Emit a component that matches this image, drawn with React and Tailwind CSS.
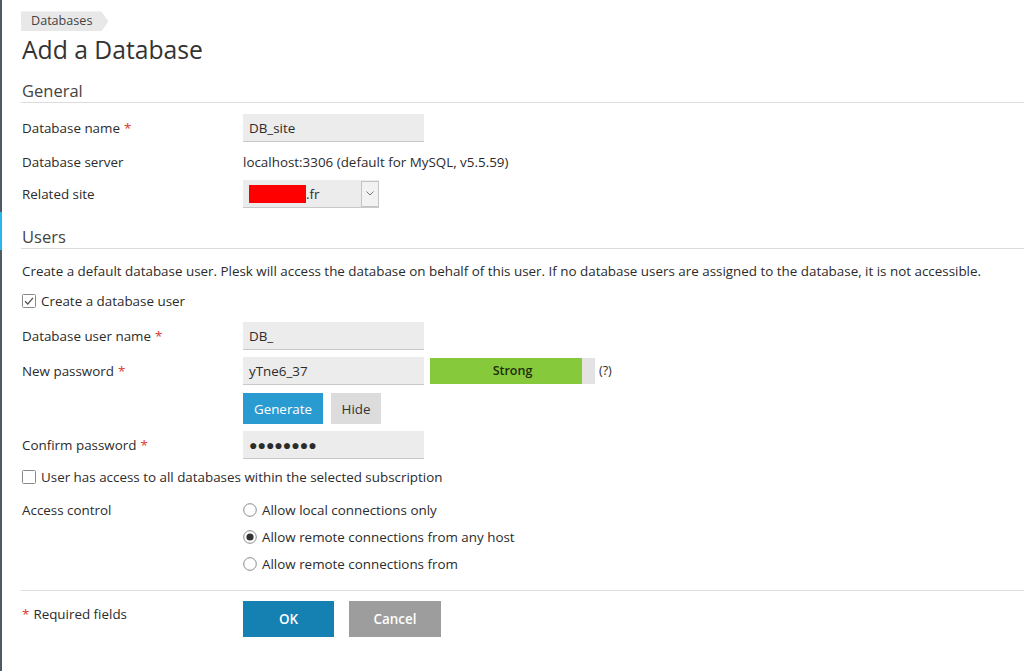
import React from 'react';

const Req = () => <span className="text-[#d9372c] ml-1">*</span>;

const Row = ({ label, required, className = '', children }) => (
  <div className={`flex items-center ${className}`}>
    <div className="w-[221px] shrink-0">
      {label}
      {required && <Req />}
    </div>
    <div className="flex items-center">{children}</div>
  </div>
);

const Input = ({ value, className = '' }) => (
  <div className={`w-[181px] h-[28px] bg-[#ececec] border-b border-[#c9c9c9] px-[6px] flex items-center ${className}`}>
    {value}
  </div>
);

const Checkbox = ({ checked }) => (
  <svg width="14" height="14" viewBox="0 0 14 14" className="shrink-0">
    <rect x="0.5" y="0.5" width="13" height="13" rx="1" fill="#fff" stroke="#8a8a8a" />
    {checked && <path d="M3 7.2 L5.8 10 L11 3.8" fill="none" stroke="#555" strokeWidth="1.3" />}
  </svg>
);

const Radio = ({ checked }) => (
  <svg width="14" height="14" viewBox="0 0 14 14" className="shrink-0">
    <circle cx="7" cy="7" r="6.3" fill="#fff" stroke="#8a8a8a" />
    {checked && <circle cx="7" cy="7" r="3.6" fill="#333" />}
  </svg>
);

const SectionHeader = ({ title, className = '' }) => (
  <div className={`h-[24px] leading-[24px] text-[16.5px] text-[#444] border-b border-[#dcdcdc] ${className}`}>
    {title}
  </div>
);

export default function App() {
  return (
    <div className="flex w-[1024px] h-[671px] bg-white text-[13.4px] text-[#2b2b2b] font-['Open_Sans',sans-serif] overflow-hidden">
      <div className="w-[2px] shrink-0 flex flex-col">
        <div className="h-[212px] bg-[#4e5b63]" />
        <div className="h-[38px] bg-[#29b6e8]" />
        <div className="flex-1 bg-[#4e5b63]" />
      </div>
      <div className="flex-1 pl-[19px]">
        <div className="pt-[10px]">
          <div className="inline-flex items-center h-[20px] pl-[10px] pr-[16px] bg-[#e8e8e8] text-[12.6px] text-[#444] [clip-path:polygon(0_0,calc(100%-7px)_0,100%_50%,calc(100%-7px)_100%,0_100%)]">
            Databases
          </div>
        </div>
        <div className="h-[36px] leading-[36px] text-[24.7px] text-[#333] mt-[1px] pl-[1px]">Add a Database</div>

        <SectionHeader title="General" className="mt-[11px] pl-[1px]" />
        <div className="pl-[1px]">
          <Row label="Database name" required className="mt-[11px] h-[28px]">
            <Input value="DB_site" />
          </Row>
          <Row label="Database server" className="mt-[6px] h-[28px]">
            localhost:3306 (default for MySQL, v5.5.59)
          </Row>
          <Row label="Related site" className="mt-[4px] h-[28px]">
            <div className="w-[136px] h-[28px] bg-[#ececec] border-b border-[#c9c9c9] flex items-center justify-between pl-[6px]">
              <div className="flex items-center">
                <div className="w-[57px] h-[18px] bg-[#ff0000]" />
                <span>.fr</span>
              </div>
              <div className="w-[18px] h-[26px] border border-[#c4c4c4] bg-[#f2f2f2] flex items-center justify-center">
                <svg width="8" height="5" viewBox="0 0 8 5">
                  <path d="M0.5 0.5 L4 4 L7.5 0.5" fill="none" stroke="#777" strokeWidth="1" />
                </svg>
              </div>
            </div>
          </Row>
        </div>

        <SectionHeader title="Users" className="mt-[17px] pl-[1px]" />
        <div className="pl-[1px]">
          <div className="mt-[12px] h-[20px] flex items-center whitespace-nowrap">
            Create a default database user. Plesk will access the database on behalf of this user. If no database users are assigned to the database, it is not accessible.
          </div>
          <div className="mt-[10px] h-[20px] flex items-center gap-[5px]">
            <Checkbox checked />
            <span>Create a database user</span>
          </div>
          <Row label="Database user name" required className="mt-[11px] h-[28px]">
            <Input value="DB_" />
          </Row>
          <Row label="New password" required className="mt-[7px] h-[28px]">
            <Input value="yTne6_37" />
            <div className="ml-[6px] w-[165px] h-[26px] bg-[linear-gradient(to_right,#86c93a_152px,#e3e3e3_152px)] flex items-center justify-center text-[12.5px] font-semibold text-[#1f2d10]">
              Strong
            </div>
            <span className="ml-[4px] text-[12.5px]">(?)</span>
          </Row>
          <div className="flex mt-[8px] pl-[221px] gap-[8px]">
            <div className="h-[31px] w-[80px] bg-[#2a9bd1] text-white flex items-center justify-center">Generate</div>
            <div className="h-[31px] w-[50px] bg-[#dcdcdc] text-[#333] flex items-center justify-center">Hide</div>
          </div>
          <Row label="Confirm password" required className="mt-[7px] h-[28px]">
            <Input value={<span className="text-[14px] font-bold">●●●●●●●●</span>} />
          </Row>
          <div className="mt-[8px] h-[20px] flex items-center gap-[5px]">
            <Checkbox />
            <span>User has access to all databases within the selected subscription</span>
          </div>
          <div className="flex mt-[13px]">
            <div className="w-[221px] shrink-0 h-[20px] flex items-center">Access control</div>
            <div className="flex flex-col gap-[7px]">
              <div className="h-[20px] flex items-center gap-[5px]"><Radio /><span>Allow local connections only</span></div>
              <div className="h-[20px] flex items-center gap-[5px]"><Radio checked /><span>Allow remote connections from any host</span></div>
              <div className="h-[20px] flex items-center gap-[5px]"><Radio /><span>Allow remote connections from</span></div>
            </div>
          </div>
        </div>

        <div className="mt-[16px] border-t border-[#dcdcdc]" />
        <div className="flex mt-[10px] pl-[1px]">
          <div className="w-[221px] shrink-0 pt-[3px]">
            <span className="text-[#d9372c] mr-[4px]">*</span>Required fields
          </div>
          <div className="flex gap-[15px]">
            <div className="h-[36px] w-[91px] bg-[#1580b2] text-white font-semibold flex items-center justify-center">OK</div>
            <div className="h-[36px] w-[92px] bg-[#9d9d9d] text-white font-semibold flex items-center justify-center">Cancel</div>
          </div>
        </div>
      </div>
    </div>
  );
}
